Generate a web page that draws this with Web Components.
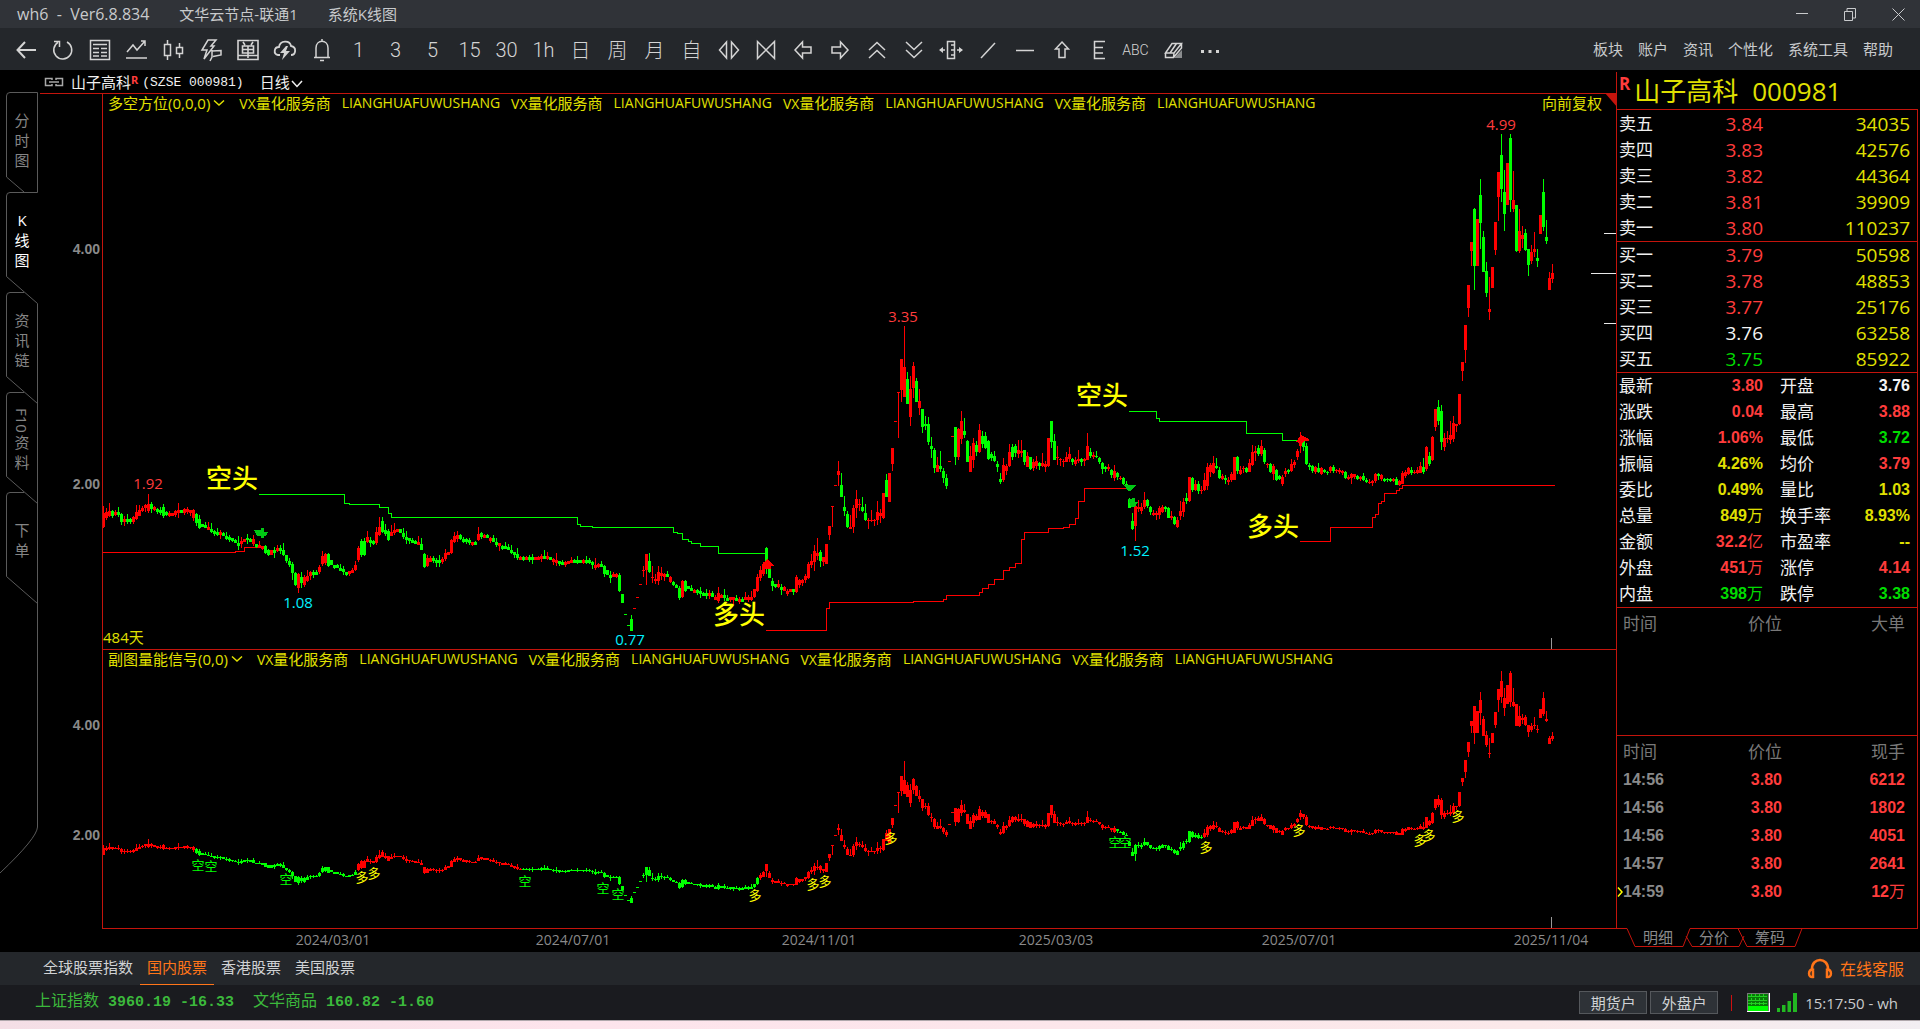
<!DOCTYPE html>
<html lang="zh-CN">
<head>
<meta charset="utf-8">
<title>wh6 系统K线图</title>
<style>
html,body{margin:0;background:#000;color:#c8cacc;font:15px/20px "Open Sans","Noto Sans CJK SC",sans-serif;--line:#c4140c;--up:#ff3c3c;--down:#00dc00;--gold:#e0e000;--gray:#8a8a8a;--accent:#ff7519}
</style>
</head>
<body>
<trade-app></trade-app>
<script>
const RESET = `*{box-sizing:border-box}button{font:inherit;color:inherit;background:none;border:0;padding:0;margin:0;cursor:pointer}a{color:inherit;text-decoration:none}table{border-collapse:collapse;width:100%}th,td{padding:0;font-weight:400;text-align:left}`;
function define(name, css, html, ready) {
  customElements.define(name, class extends HTMLElement {
    constructor() {
      super();
      this.attachShadow({ mode: 'open' }).innerHTML = `<style>${RESET}${css}</style>${typeof html === 'function' ? html() : html}`;
    }
    connectedCallback() { if (ready) ready(this, this.shadowRoot); }
  });
}

define('title-bar', `:host{display:flex;align-items:center;height:28px;background:#303338;padding:0 12px 0 17px}
.n{display:flex;gap:30px;white-space:pre;flex:1;font-size:15px}.n span:first-child{font-size:16px}
button{width:48px;height:28px;display:grid;place-items:center}svg{stroke:#c8cacc;fill:none}.w{display:flex;margin-right:-14px}`,
`<div class="n"><span>wh6  -  Ver6.8.834</span><span>文华云节点-联通1</span><span>系统K线图</span></div>
<div class="w"><button aria-label="最小化"><svg width="12" height="12"><path d="M0 5.500H12"/></svg></button>
<button aria-label="还原"><svg width="12" height="13"><path d="M.5 3.500H8.500V12.500H.5ZM3 3V.5H11.500V10H9"/></svg></button>
<button aria-label="关闭"><svg width="13" height="13"><path d="M.5 .5L12.500 12.500M12.500 .5L.5 12.500"/></svg></button></div>`);

const TOOLS = [
 ['返回','<path d="M22 12H4M11 4L3.500 12L11 20" stroke-width="2"/>'],
 ['刷新','<path d="M16 4A9 9 0 1 1 7 4.300M3 3.500H8.500V9"/>'],
 ['报价','<path d="M2.500 2.500H21.500V21.500H2.500ZM5 6.500H19M5 10.500H11M13 10.500H19M5 14.500H11M13 14.500H19M5 18H11M13 18H19"/>'],
 ['分时','<path d="M2 14L8 7L12 12L20 3M20 8V3H16M1 20H22"/>'],
 ['K线','<path d="M2.500 6.500H8.500V17.500H2.500ZM5.500 2V6M5.500 18V22M14.500 9.500H20.500V15.500H14.500ZM17.500 5V9M17.500 16V20"/>'],
 ['闪电下单','<path d="M9 2H17L12 8H15L5 21L8 12H3ZM13 13L22 12.500V17L14 18.500M13 12V19L11 23"/>'],
 ['画面','<path d="M2 2.500H22V21.500H2ZM7 4L9 7M17 4L15 7M6.500 8H17.500V15H6.500ZM6 11.500H18M12 8V20M2 17.500H22" stroke-width="1.600"/>'],
 ['云','<path d="M7 17H5C0 16 1 9 6 9C7 2 17 2 18 8C24 9 23 17 18 17" stroke-width="1.800"/><path d="M13 8L7 15H11L9 22L17 13H13L15 8Z" fill="#d4d4d4" stroke="none"/>'],
 ['预警','<path d="M4 19.500H20M6 19V10C6 1 18 1 18 10V19M10 22.500H14M12 1V3"/>'],
 ['1分','1'],['3分','3'],['5分','5'],['15分','15'],['30分','30'],['1小时','1h'],['日线','日'],['周线','周'],['月线','月'],['自定义','自'],
 ['放大','<path d="M9.500 4V20L2.500 12ZM14.500 4V20L21.500 12Z"/>'],
 ['缩小','<path d="M3.500 3.500V20.500L12 12ZM20.500 3.500V20.500L12 12Z"/>'],
 ['左移','<path d="M4 12L11.500 4V9H20V15H11.500V20Z"/>'],
 ['右移','<path d="M20 12L12.500 4V9H4V15H12.500V20Z"/>'],
 ['向上','<path d="M4 12L12 4.500L20 12M4 20L12 12.500L20 20"/>'],
 ['向下','<path d="M4 12L12 19.500L20 12M4 4L12 11.500L20 4"/>'],
 ['标尺','<path d="M8.500 3.500H15.500V20.500H8.500ZM12 7H15M12 12H15M12 17H15M6 12H1M18 12H23"/><path d="M0 12L4 9V15ZM24 12L20 9V15Z" fill="#d4d4d4" stroke="none"/>'],
 ['斜线','<path d="M5 20L19 5"/>'],
 ['横线','<path d="M3 12.500H21"/>'],
 ['上箭头','<path d="M12 4L18.500 11H15V19.500H9V11H5.500Z"/>'],
 ['分割线','<path d="M18 3.500H7.500V20.500H18M7 9.500H16M7 15H16"/>'],
 ['文字','ABC'],
 ['橡皮','<path d="M13 20L21 12V20Z" fill="#8a8c8e" stroke="none"/><path d="M4.500 15L11 5.500H20.500L13 15ZM4.500 15V19.500H12.500L20.500 10V5.500M13 15L12.500 19.500M9 15L15.500 5.500"/>'],
 ['更多','<path d="M3 13.500H6M10.500 13.500H13.500M18 13.500H21" stroke-width="3"/>']
];
define('tool-bar', `:host{display:flex;justify-content:space-between;height:42px;background:#24272b;padding:0 27px 0 7px}
.t{display:flex;padding-top:4px}.t button{width:37px;height:36px;display:grid;place-items:center;color:#d4d4d4}
svg{width:24px;height:24px;fill:none;stroke:#d4d4d4;stroke-width:1.500}
.x{font:300 20px/24px Roboto,sans-serif}.c{font:300 20px/24px "Noto Sans CJK SC",sans-serif}.s{font:300 14px/24px Roboto,sans-serif}
nav{display:flex;gap:15px;align-items:center;white-space:nowrap}`,
() => `<div class="t">${TOOLS.map(([l, v]) => v[0] === '<' ? `<button aria-label="${l}"><svg viewBox="0 0 24 24">${v}</svg></button>` : `<button class="${v === 'ABC' ? 's' : /[日周月自]/.test(v) ? 'c' : 'x'}">${v}</button>`).join('')}</div>
<nav>${['板块','账户','资讯','个性化','系统工具','帮助'].map(t => `<a href="#">${t}</a>`).join('')}</nav>`);

define('side-tabs', `:host{display:grid;width:40px;flex:none;color:#858585}svg{grid-area:1/1;width:40px;height:810px;fill:none;stroke:#5a5a5a}
nav{grid-area:1/1;padding-top:22px;width:38px;padding-left:6px}button{width:32px;height:100px;padding-bottom:4px;display:flex;flex-direction:column;align-items:center;justify-content:center;line-height:20px}
button.on{color:#fff}span{display:block}.w{width:16px;word-break:break-all;text-align:center}.v{writing-mode:vertical-rl;line-height:16px}`,
`<svg><path d="M6.500 107V26Q6.500 22.500 10 22.500H37.500V122.500H10Q6.500 122.500 6.500 126V206.500L37.500 233.500V757Q37 768 0 803M6.500 107L24 122M24 222.500H10Q6.500 222.500 6.500 226V306.500L37.500 333.500M24 322.500H10Q6.500 322.500 6.500 326V406.500L37.500 433.500M24 422.500H10Q6.500 422.500 6.500 426V506.500L37.500 533.500"/></svg>
<nav><button><span class="w">分时图</span></button><button class="on"><span class="w">K线图</span></button><button><span class="w">资讯链</span></button><button><span class="v">F10</span><span class="w">资料</span></button><button><span class="w">下单</span></button></nav>`);

define('chart-head', `:host{display:flex;align-items:center;height:23px;padding-left:4px;color:#f0f0f0;white-space:pre}
svg{fill:none;stroke:#a8a8a8;margin-right:7px}sup{color:var(--up);font:bold 11px/12px "Noto Sans",sans-serif;align-self:flex-start;padding-top:4px;margin-right:4px}
.m{font:13px/20px "Liberation Mono",monospace;margin-right:16px;padding-top:2px}.d svg{stroke:#f0f0f0;margin:0 0 0 1px}`,
`<svg width="20" height="10" stroke-width="1.500"><path d="M8 3V1.500H1.500V8.500H8V7M12 3V1.500H18.500V8.500H12V7M5 5H15"/></svg><span>山子高科</span><sup>R</sup><span class="m">(SZSE 000981)</span><button class="d">日线<svg width="12" height="8"><path d="M1 1L6 6.500L11 1" stroke-width="1.500"/></svg></button>`);

define('indicator-line', `:host{display:flex;align-items:center;gap:11px;height:18px;color:var(--gold);white-space:nowrap;padding-left:5px}
button{display:flex;align-items:center;gap:3px;margin-right:3px}svg{fill:none;stroke:var(--gold);stroke-width:1.500}b{font-weight:400;font-size:14px}`,
() => `<button><slot></slot><svg width="12" height="8"><path d="M1 1.500L6 6L11 1.500"/></svg></button>${'<span><b>VX</b>量化服务商</span><b>LIANGHUAFUWUSHANG</b>'.repeat(4)}`);

/* One candle every 3px. Entry: bodyTop-bodyBottom, colour, wickTop-wickBottom. */
const MID = [[103,518],[109,513],[118,514],[121,521],[131,520],[136,515],[140,508],[148,506],[152,508],[160,512],[170,514],[180,511],[190,512],[197,522],[205,526],[212,530],[222,534],[230,540],[240,544],[246,539],[255,544],[262,546],[268,555],[277,547],[283,554],[290,565],[297,582],[302,580],[308,574],[317,570],[325,556],[330,564],[340,571],[350,571],[355,565],[360,548],[368,538],[374,542],[381,527],[388,536],[396,529],[402,536],[412,541],[420,548],[425,561],[432,559],[440,561],[448,551],[455,537],[465,539],[475,543],[482,535],[490,540],[505,546],[512,552],[520,558],[530,557],[545,558],[552,558],[562,565],[570,560],[580,559],[590,563],[600,564],[606,574],[616,577],[664,576],[670,582],[676,585],[680,590],[688,588],[700,594],[710,595],[716,598],[720,595],[730,599],[740,600],[750,598],[754,590],[760,574],[775,586],[780,587],[786,591],[795,590],[800,579],[806,577],[812,558],[824,563]];
const PART = {
 103:'513-527r506-528', 106:'512-518r508-520', 109:'511-516r503-517', 112:'511-516g510-518', 136:'512-519r505-520', 148:'504-511r494-513', 151:'504-509g502-513', 163:'507-516g504-518',
 196:'514-523g513-526', 199:'519-528g515-529', 247:'538-540g534-544', 265:'546-553g545-554', 289:'561-565g558-567', 292:'564-573g562-580', 295:'573-585g572-586', 298:'574-588r573-593', 301:'577-583g572-588', 304:'577-585r575-587', 322:'556-564r551-566', 325:'554-563r553-565', 328:'554-566g553-567',
 358:'548-560r546-562', 361:'541-555g539-557', 364:'541-555g538-556', 367:'537-542r531-543', 376:'532-543r527-545', 379:'527-535r517-536', 382:'521-532g517-533', 385:'530-534g524-536', 388:'531-540g529-541', 424:'554-567g553-568', 427:'558-566r555-567', 451:'540-553r539-554', 454:'536-542r532-543', 478:'534-540r527-541', 481:'533-537g532-539',
 604:'566-574g565-577', 619:'575-591g573-592', 622:'594-603g594-603', 625:'614-615g614-615', 628:'625-626g625-626', 631:'619-631g615-631', 634:'608-609r608-609', 637:'597-598r597-598', 640:'584-585r584-585', 643:'570-571r566-577', 646:'554-570r554-585', 649:'561-572g553-573', 652:'577-578r566-583', 655:'579-581r574-584', 658:'572-581r566-585', 661:'573-576r567-580', 679:'588-598g586-600', 682:'581-597r580-598', 685:'581-591g580-592', 718:'593-601r587-603', 757:'577-591r574-592', 760:'570-578r566-581', 763:'565-574r562-576', 766:'548-562g547-574', 769:'567-578g562-578', 772:'581-586g578-591', 796:'577-592r575-593', 808:'564-578r562-579', 811:'561-565r554-568', 814:'551-562r545-571', 817:'553-556r538-560', 820:'552-561g550-567', 826:'544-564r544-564', 829:'526-535r526-540', 832:'506-507r506-527', 835:'485-486r485-486', 838:'471-475r461-486', 841:'485-497g473-497', 844:'507-511g496-516', 847:'514-527g511-528', 850:'527-529r515-529'
};
const TAIL = `508-527r505-533 499-508r490-518 504-505r499-511 507-511g497-512 513-520g504-521 520-521r518-529 520-521r510-522 520-521r519-526 512-520r501-525 513-516r509-523 493-518r493-519 480-497g474-497 473-502r473-502 448-464r448-471 421-422r421-422 392-393r392-438 359-390r359-402 367-397r326-397 379-404g372-404 389-417r376-426 366-388r362-398 381-402g378-402 401-408r389-415 409-427g409-433 424-426g416-430 424-442g417-445 446-449g437-458 450-468g448-473 465-472r457-472 466-469g451-472 471-478g468-483 478-486g474-489 461-462r461-462 436-437r436-437 427-457g427-465 429-457r428-460 421-439r411-444 431-435g418-438 441-462g440-462 456-472r446-472 443-460r438-468 445-452g441-456 430-452r424-453 436-444g431-448 436-448g432-449 441-459g440-460 454-458g452-461 456-461g451-462 464-467g461-472 479-482g473-484 465-480r458-482 466-471r464-475 452-466r444-467 447-457g444-460 446-453g444-457 450-454r440-458 451-453r440-457 450-462g450-465 456-467r452-467 457-469g457-470 462-468r459-471 461-466r456-469 463-466g462-470 463-466r453-467 464-467r461-472 438-466r438-467 421-442g421-448 441-460g434-460 457-458r446-465 459-460r458-466 461-462r459-467 457-462r452-462 454-459r447-462 459-462g458-465 460-464r457-466 459-461r450-463 459-462g458-466 459-461r458-466 446-460r433-460 452-456g448-458 455-457r452-459 456-457g451-458 458-462g457-464 463-469g462-474 467-469g466-472 467-469r464-471 470-475g469-478 471-478r465-481 473-477g472-480 478-479r476-480 478-484g477-485 484-486g481-488 499-508g498-508 521-529g513-530 506-526r504-541 507-509r500-512 507-511r503-514 500-507r492-509 500-506g499-508 507-512g506-515 513-515r510-516 513-515r511-520 508-515r506-519 507-512r505-513 507-509g506-512 508-518g507-518 516-518r511-520 517-524g516-525 520-527r517-528 511-516r501-520 502-512r498-517 498-501g493-504 477-501r477-502 478-490g477-492 484-490r480-491 484-491g481-494 490-491r486-494 480-490r473-491 467-486r463-490 465-472r463-477 463-473r456-474 466-468g458-469 470-478g467-479 476-479r474-480 478-480g475-484 480-482r477-485 474-480r472-482 457-480r457-480 457-471g456-474 470-474r466-475 468-469r466-473 468-472g467-473 463-472r459-472 452-465r445-466 451-453r446-461 448-454g445-456 446-454r440-456 450-462g448-464 464-465r463-468 464-472g463-473 466-474r464-480 470-480g469-481 476-479g475-480 477-484r475-486 471-474r468-477 470-472g469-474 464-471r459-472 462-465r460-468 451-457r449-460 438-446r432-453 440-447g440-451 446-464g443-465 465-467g463-470 466-471g465-473 467-472r466-474 468-472g463-473 468-474r467-475 470-472g469-473 472-473g471-475 467-471r466-473 467-471g465-473 470-471r469-473 470-472r468-474 471-473r470-475 472-478g471-479 477-479r475-480 474-478r473-484 474-477r474-479 476-479g475-480 477-479r476-481 476-480g473-481 480-482g478-483 482-483r479-484 481-483r480-486 474-481r473-483 474-476g473-480 475-479r474-481 479-481g478-482 479-480g478-482 479-481g478-482 479-481r478-482 479-485g477-485 481-485r480-486 473-484r471-484 472-476r470-478 468-474r467-475 470-473g467-475 472-473r470-474 470-473r467-474 466-473r462-473 467-472g458-474 447-469r446-471 456-464g452-466 437-460r436-461 409-427r409-431 407-421g400-425 411-442g405-450 438-447r433-451 438-439r431-443 435-440r421-444 423-439r416-442 424-426r424-432 394-424r394-425 362-371r362-381 325-350r325-363 285-308r285-317 242-251r242-266 209-266g208-290 219-266r219-266 195-223g179-249 237-272g231-272 271-293g262-297 309-312r277-320 267-288r267-288 222-250r222-255 172-197r172-221 155-189g134-202 192-214g170-231 163-205r163-205 138-200g134-212 200-209r171-212 205-251g205-252 231-251r209-253 235-239r226-248 233-250g229-251 249-265g249-276 252-261r245-264 249-252r232-257 258-261g249-267 215-234r215-234 192-227g179-231 237-241g220-244 278-290r272-290 273-279r264-283`.split(' ');
const CANDLES = (() => {
  const out = [];
  let seed = 7, prev = 518;
  const rnd = () => (seed = seed * 16807 % 2147483647) / 2147483647;
  const at = x => {
    for (let i = 1; i < MID.length; i++) if (x <= MID[i][0]) {
      const [a, b] = MID[i - 1], [c, d] = MID[i];
      return b + (d - b) * (x - a) / (c - a);
    }
    return MID[MID.length - 1][1];
  };
  for (let i = 0; i < 484; i++) {
    const x = 103 + 3 * i, s = PART[x] || (i >= 250 && TAIL[i - 250]);
    if (s) {
      const m = s.match(/(\d+)-(\d+)([rg])(\d+)-(\d+)/);
      out.push({ x, t: +m[1], b: +m[2], up: m[3] === 'r', h: +m[4], l: +m[5] });
      prev = (+m[1] + +m[2]) / 2;
    } else {
      const c = Math.round(at(x) + (rnd() - .5) * 4), up = c < prev || rnd() < .25;
      const t = Math.round(Math.min(c, prev)), b = Math.max(Math.round(Math.max(c, prev)), t + 3);
      out.push({ x, t, b, up, h: t - Math.round(rnd() * rnd() * 8), l: b + Math.round(rnd() * rnd() * 6) });
      prev = c;
    }
  }
  return out;
})();
const RED = '#f00', GREEN = '#0f0';
const bars = (scale, color) => CANDLES.map(k => {
  const t = Math.round(scale(k.t)), b = Math.max(Math.round(scale(k.b)), t + 1), h = Math.round(scale(k.h)), l = Math.max(Math.round(scale(k.l)), b), f = color(k);
  return `<path fill="${f}" d="M${k.x - 1} ${t}h3v${b - t}h-3zM${k.x} ${h}h1v${l - h}h-1z"/>`;
}).join('');
const label = (x, y, s, c) => `<text x="${x}" y="${y}" class="${c}">${s}</text>`;
const steps = (d, c) => `<path d="${d}" fill="none" stroke="${c}"/>`;
const PANE_CSS = `:host{display:grid;grid-template:1fr/1fr;min-width:0}svg{grid-area:1/1;width:100%;height:100%;shape-rendering:crispEdges;display:block}
.f{grid-area:1/1;margin-left:62px;border-left:1px solid var(--line);border-bottom:1px solid var(--line);display:flex;justify-content:space-between;align-items:flex-start}
text{font:15px "Open Sans","Noto Sans CJK SC",sans-serif;text-anchor:middle}.y{font:bold 14px "Liberation Sans",sans-serif;fill:var(--gray);text-anchor:end}.r{fill:var(--up)}.c{fill:#00f0ff}.d{fill:var(--gold);text-anchor:start}
.k{font:500 26px "Noto Sans CJK SC",sans-serif;fill:#ff0}.s{font:13px "Noto Sans CJK SC",sans-serif}.z{fill:#0f0}.o{fill:#ff0}`;

define('price-pane', PANE_CSS + `:host{border-top:1px solid var(--line)}.a{color:var(--gold);padding-right:14px;line-height:18px}`,
() => `<svg><g transform="translate(-40,-94)">
${label(100,254,'4.00','y')}${label(100,489,'2.00','y')}
${steps('M259 494.500H344V503.500H349V504.500H379.500V507.500H388.500V513.500H391.500V517.500H577.500V524.500H580.500V526.500H592V527.500H673.500V532.500H677V533.500H682.500V539.500H688.500V541.500H691.500V543.500H700.500V546.500H718.500V553.500H766M1129 411.500H1156.500V418.500H1159.500V421.500H1246.500V433.500H1282.500V440.500H1298', GREEN)}
${steps('M103 552.500H235V551.500H244.500V547.500H262M766 630.500H826.500V608.500H829.500V602.500H913V601.500H943.500V599.500H946.500V595.500H979.500V592.500H982.500V588.500H988.500V584.500H994.500V579.500H1003.500V570.500H1009.500V567.500H1015.500V563.500H1021.500V539.500H1024.500V532.500H1048.500V528.500H1063V527.500H1069.500V524.500H1075.500V518.500H1078.500V501.500H1084.500V488.500H1127M1300 541.500H1330.500V527.500H1372.500V517.500H1375.500V514.500H1378.500V503.500H1381.500V501.500H1384.500V493.500H1396.500V490.500H1399.500V488.500H1402.500V485.500H1555', RED)}
${bars(y => y, k => k.up ? RED : GREEN)}
<path fill="#00c814" d="M254 530h7v-2h3v4h4l-2 4h-2v2h-3v-2h-4zM1124 485h12l-4 4-2 2h-2zM1128 499h4v-1h3v4h3l-3 5h-4z"/><path fill="#f00" d="M761 565l6-6 8 7h-4v3h-7v-4zM1296 442l5-7 8 4v2h-5l-2 3z"/>
<path stroke="#e8e8e8" d="M1604 233.500H1616M1591 273.500H1616M1604 323.500H1616"/><path stroke="#999" d="M1551.500 638V649"/>
${label(148,489,'1.92','r')}${label(298,608,'1.08','c')}${label(630,645,'0.77','c')}${label(903,322,'3.35','r')}${label(1135,556,'1.52','c')}${label(1501,130,'4.99','r')}
${label(232,488,'空头','k')}${label(739,624,'多头','k')}${label(1102,405,'空头','k')}${label(1273,536,'多头','k')}${label(103,643,'484天','d')}
<path fill="#c4140c" d="M1605 93H1617V107Z" shape-rendering="auto"/></g></svg>
<div class="f"><indicator-line>多空方位(0,0,0)</indicator-line><span class="a">向前复权</span></div>`);

define('signal-pane', PANE_CSS, () => {
  const sc = y => 725 + (y - 249.5) * .467;
  const col = k => (k.x > 195 && k.x < 358) || (k.x > 522 && k.x < 760) || (k.x > 1114 && k.x < 1204) ? GREEN : RED;
  const z = [[198,870],[211,871],[286,884],[525,886],[603,893],[618,899],[1115,847],[1125,847]], o = [[362,882],[374,878],[755,900],[813,889],[825,886],[891,843],[1206,852],[1299,835],[1420,845],[1429,840],[1458,821]];
  return `<svg><g transform="translate(-40,-650)">${label(100,730,'4.00','y')}${label(100,840,'2.00','y')}${bars(sc, col)}${z.map(p => label(p[0], p[1], '空', 's z')).join('')}${o.map(p => label(p[0], p[1], '多', 's o')).join('')}<path stroke="#999" d="M1551.500 917V928"/></g></svg><div class="f"><indicator-line>副图量能信号(0,0)</indicator-line></div>`;
});

define('date-axis', `:host{display:block;height:23px}svg{width:100%;height:23px;display:block}text{font:14px "Open Sans",sans-serif;fill:var(--gray);text-anchor:middle}`,
() => `<svg><g transform="translate(-40,0)">${[[333,'2024/03/01'],[573,'2024/07/01'],[819,'2024/11/01'],[1056,'2025/03/03'],[1299,'2025/07/01'],[1551,'2025/11/04']].map(d => label(d[0], 16, d[1], '')).join('')}</g></svg>`);

define('kline-chart', `:host{display:flex;flex-direction:column;flex:1;min-width:0}price-pane{flex:557 1 0}signal-pane{flex:279 1 0}`,
`<chart-head></chart-head><price-pane></price-pane><signal-pane></signal-pane><date-axis></date-axis>`);

const cls = { r: 'var(--up)', g: 'var(--down)', y: 'var(--gold)', w: '#f4f4f4' };
const book = rows => `<table>${rows.map(([a, b, c, k]) => `<tr><th>${a}</th><td style="color:${cls[k || 'r']}">${b}</td><td>${c}</td></tr>`).join('')}</table>`;
define('order-book', `:host{display:block;padding-top:1px;color:#f0f0f0}table{table-layout:fixed}tr{height:26px}table+table{border-top:1px solid var(--line)}th{font-size:17px;padding-left:2px;width:70px}td{font-size:19px;text-align:right;width:76px}td:last-child{width:auto;color:var(--gold);padding-right:7px}`,
() => book([['卖五','3.84','34035'],['卖四','3.83','42576'],['卖三','3.82','44364'],['卖二','3.81','39909'],['卖一','3.80','110237']]) + book([['买一','3.79','50598'],['买二','3.78','48853'],['买三','3.77','25176'],['买四','3.76','63258','w'],['买五','3.75','85922','g']]));

const stat = rows => `<table>${rows.map(([a, b, k]) => `<tr><th>${a}</th><td style="color:${cls[k]}">${b.replace(/[万亿]/, '<i>$&</i>')}</td></tr>`).join('')}</table>`;
define('quote-stats', `:host{display:grid;grid-template-columns:157px 1fr;color:#f0f0f0}tr{height:26px}th{font-size:17px;padding-left:2px;white-space:nowrap}td{font:bold 16px/20px "Liberation Sans","Noto Sans CJK SC",sans-serif;text-align:right;padding-right:11px}i{font-style:normal;font-weight:400}
table:first-child{border-right:1px dashed var(--line)}table+table th{padding-left:6px}table+table td{padding-right:7px}`,
() => stat([['最新','3.80','r'],['涨跌','0.04','r'],['涨幅','1.06%','r'],['振幅','4.26%','y'],['委比','0.49%','y'],['总量','849万','y'],['金额','32.2亿','r'],['外盘','451万','r'],['内盘','398万','g']]) +
 stat([['开盘','3.76','w'],['最高','3.88','r'],['最低','3.72','g'],['均价','3.79','r'],['量比','1.03','y'],['换手率','8.93%','y'],['市盈率','--','y'],['涨停','4.14','r'],['跌停','3.38','g']]));

const tick = (last, rows) => `<table><tr><th>时间</th><th>价位</th><th>${last}</th></tr>${rows.map(r => `<tr><td>${r[0]}</td><td>${r[1]}</td><td>${r[2].replace('万', '<i>万</i>')}</td></tr>`).join('')}</table>`;
const TICK_CSS = `:host{display:block;padding-top:2px}table{table-layout:fixed}tr{height:28px}th{font-size:17px;color:#787878}th,td{text-align:right}td{font:bold 16px/20px "Liberation Sans","Noto Sans CJK SC",sans-serif;color:var(--up)}th:first-child,td:first-child{width:80px;text-align:left;padding-left:6px}td:first-child{color:var(--gray)}th:nth-child(2),td:nth-child(2){width:85px}th:last-child,td:last-child{padding-right:12px}i{font-style:normal;font-weight:400}
tr.cur td:first-child{padding-left:0}svg{width:6px;height:10px;fill:none;stroke:#ff0;stroke-width:1.500}`;
define('big-orders', TICK_CSS, () => tick('大单', []));
define('tick-list', TICK_CSS, () => tick('现手', [['14:56','3.80','6212'],['14:56','3.80','1802'],['14:56','3.80','4051'],['14:57','3.80','2641'],['14:59','3.80','12万']]), (h, r) => {
  const row = r.querySelector('tr:last-child'); row.className = 'cur';
  row.cells[0].innerHTML = '<svg><path d="M1 .5L5 5L1 9.500"/></svg>14:59';
});

define('quote-panel', `:host{display:flex;flex-direction:column;width:304px;flex:none;padding-top:2px}
.b{flex:1;display:flex;flex-direction:column;border-left:1px solid var(--line)}
h1{margin:0;height:37px;display:flex;align-items:center;font:26px/36px "Open Sans","Noto Sans CJK SC",sans-serif;color:var(--gold);padding-left:2px;gap:14px}
h1 b{font:bold 17px/20px "Open Sans",sans-serif;color:var(--up);align-self:flex-start;margin-right:-10px;padding-top:2px}
.q{flex:1;display:flex;flex-direction:column;margin-right:2px;border-top:1px solid var(--line);border-right:1px solid var(--line)}
quote-stats,big-orders,tick-list{border-top:1px solid var(--line)}big-orders{flex:1}tick-list{height:193px}
.t{display:grid;height:24px}.t svg{grid-area:1/1;width:304px;height:24px;fill:none;stroke:var(--line)}.t div{grid-area:1/1;display:flex;padding-left:14px;color:var(--gray);line-height:18px;align-items:flex-start}.t button{width:56px}`,
`<div class="b"><h1><b>R</b><span>山子高科</span><span>000981</span></h1><div class="q"><order-book></order-book><quote-stats></quote-stats><big-orders></big-orders><tick-list></tick-list></div></div>
<div class="t"><svg><path d="M0 .5H11L19 18.500H67L74 .5H302M70 8L76 18.500H123L128 8M122 .5L131 18.500H179L186 .5"/></svg><div><button>明细</button><button>分价</button><button>筹码</button></div></div>`);

define('market-tabs', `:host{display:flex;justify-content:space-between;height:33px;background:#24272b;padding:0 16px 0 36px}nav{display:flex}nav a{padding:5px 7px 0;height:33px;color:#d0d2d4}nav a.on{color:var(--accent);border-bottom:1px solid var(--accent)}
.s{display:flex;align-items:center;gap:7px;color:var(--accent);font-size:16px}svg{fill:none;stroke:var(--accent);stroke-width:2.500}`,
`<nav><a href="#">全球股票指数</a><a href="#" class="on">国内股票</a><a href="#">香港股票</a><a href="#">美国股票</a></nav>
<button class="s"><svg width="26" height="22"><path d="M5 12V11C5 -1 21 -1 21 11V12M6 10.500V19C1 20 .5 12 6 11ZM20 10.500V19C25 20 25.500 12 20 11Z"/></svg>在线客服</button>`);

define('status-bar', `:host{display:flex;justify-content:space-between;height:35px;background:#1a1b1f;padding:0 22px 0 35px;align-items:center}
.i{display:flex;align-items:baseline;gap:9px;color:#3cb83c;font:bold 15px/20px "Liberation Mono","Noto Sans CJK SC",monospace}.i span{font-weight:400;font-size:16px}.i span+b+b{margin-right:10px}
.r{display:flex;align-items:center;line-height:18px}.r button{width:68px;height:23px;line-height:20px;border:1px solid #55585c;background:#2e3237;color:#d0d2d4;margin-right:3px}hr{width:1px;height:16px;border:0;background:#d01010;margin:0 15px 0 10px}svg{display:block;margin-right:7px}`,
`<div class="i"><span>上证指数</span><b>3960.19</b><b>-16.33</b><span>文华商品</span><b>160.82</b><b>-1.60</b></div>
<div class="r"><button>期货户</button><button>外盘户</button><hr><svg width="23" height="19"><path fill="#fff" d="M0 0H23V19H0Z"/><path fill="#777" d="M0 0H22V18H0Z"/><path fill="#087808" d="M1 1H21V13H1Z"/><path stroke="#20d020" d="M1 3.500H21M1 7.500H21M1 10.500H21M4.500 1V13M8.500 1V13M12.500 1V13M16.500 1V13" stroke-dasharray="3 1"/><path fill="#0f0" d="M1 13H21V18H1Z"/></svg>
<svg width="21" height="19" fill="#22b822"><path d="M0 15H3V19H0ZM5 12H8.500V19H5ZM10.500 8H14V19H10.500ZM16 0H20V19H16Z"/></svg><span>15:17:50 - wh</span></div>`);

define('trade-app', `:host{display:flex;flex-direction:column;min-height:100vh;background:#000}main{flex:1;display:flex;min-height:0}
footer{height:9px;border-top:1px solid #b0a8ac;background:linear-gradient(90deg,#f4dfe6,#fde4ec 30%,#fbe9ea 80%,#f2eef2)}`,
`<title-bar></title-bar><tool-bar></tool-bar><main><side-tabs></side-tabs><kline-chart></kline-chart><quote-panel></quote-panel></main><market-tabs></market-tabs><status-bar></status-bar><footer></footer>`);
</script>
</body>
</html>
